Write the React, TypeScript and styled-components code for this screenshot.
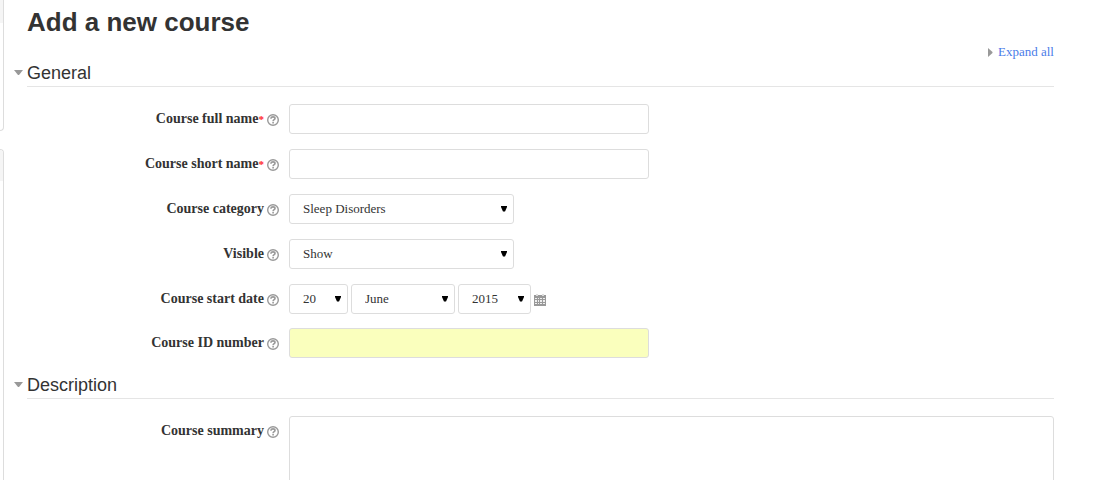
import React from "react";
import styled, { createGlobalStyle } from "styled-components";

const serif = `Georgia, "Liberation Serif", serif`;
const sans = `"Liberation Sans", Arial, sans-serif`;
const line = "#dddddd";

const GlobalStyle = createGlobalStyle`
  *, *::before, *::after { box-sizing: border-box; }
  body { margin: 0; background: #fff; color: #333; font: 13px/20px ${serif}; }
`;

const Page = styled.div`
  display: flex;
  align-items: stretch;
  min-height: 100vh;
`;

const SideRegion = styled.aside`
  display: flex;
  flex-direction: column;
  gap: 18px;
  width: 4px;
  flex: none;
`;

const Block = styled.div<{ $first?: boolean }>`
  border: 1px solid ${line};
  border-left: 0;
  border-radius: ${(p) => (p.$first ? "0 0 4px 0" : "0 4px 0 0")};
  border-top-width: ${(p) => (p.$first ? "0" : "1px")};
  border-bottom-width: ${(p) => (p.$first ? "1px" : "0")};
  height: ${(p) => (p.$first ? "131px" : "auto")};
  flex: ${(p) => (p.$first ? "none" : "1")};
  overflow: hidden;
`;

const BlockHeader = styled.div<{ $height: number }>`
  height: ${(p) => p.$height}px;
  background: #f5f5f5;
`;

const Main = styled.main`
  flex: 1;
  min-width: 0;
  padding: 0 42px 24px 10px;
`;

const Title = styled.h1`
  margin: 0;
  padding-left: 13px;
  font: bold 26px/44px ${sans};
`;

const Actions = styled.div`
  display: flex;
  justify-content: flex-end;
  line-height: 16px;
`;

const ExpandLink = styled.a`
  display: flex;
  align-items: center;
  gap: 5px;
  color: #4a7ce8;
  text-decoration: none;
`;

const SectionHeader = styled.div`
  display: flex;
  align-items: center;
`;

const Toggle = styled.button`
  flex: none;
  display: flex;
  width: 13px;
  padding: 0 0 2px;
  border: 0;
  background: none;
`;

const SectionTitle = styled.h2`
  flex: 1;
  margin: 0;
  border-bottom: 1px solid #e5e5e5;
  font: 18px/26px ${sans};
`;

const Fields = styled.div`
  display: flex;
  flex-direction: column;
  gap: 15px;
  padding: 17px 0 14px 13px;
`;

const FieldGroup = styled.div`
  display: flex;
  flex-direction: column;
  gap: 14px;
`;

const Row = styled.div`
  display: flex;
  align-items: flex-start;
  gap: 10px;
`;

const LabelCell = styled.div`
  flex: none;
  display: flex;
  justify-content: flex-end;
  align-items: center;
  gap: 3px;
  width: 252px;
  height: 30px;
`;

const Label = styled.label`
  font-size: 14px;
  font-weight: bold;
  line-height: 20px;
`;

const Required = styled.span`
  color: #f22;
  font-size: 11px;
  line-height: 1;
`;

const HelpButton = styled.button`
  display: flex;
  padding: 2px 0 0;
  border: 0;
  background: none;
`;

const Control = styled.div`
  flex: 1;
  min-width: 0;
  display: flex;
  align-items: center;
  gap: 3px;
`;

const TextInput = styled.input<{ $highlight?: boolean }>`
  width: 360px;
  max-width: 100%;
  height: 30px;
  padding: 4px 6px;
  border: 1px solid ${line};
  border-radius: 3px;
  background: ${(p) => (p.$highlight ? "#faffbd" : "#fff")};
  color: #333;
  font: 13px/20px ${serif};
`;

const TextArea = styled.textarea`
  display: block;
  width: 100%;
  height: 240px;
  padding: 4px 6px;
  border: 1px solid ${line};
  border-radius: 3px;
  background: #fff;
  color: #333;
  font: 13px/20px ${serif};
  resize: none;
`;

const SelectBox = styled.div<{ $width: number }>`
  position: relative;
  width: ${(p) => p.$width}px;
`;

const NativeSelect = styled.select`
  display: block;
  appearance: none;
  width: 100%;
  height: 30px;
  padding: 0 18px 0 13px;
  border: 1px solid ${line};
  border-radius: 3px;
  background: #fff;
  color: #333;
  font: 13px/20px ${serif};
`;

const SelectArrow = styled.svg`
  position: absolute;
  right: 7px;
  top: 11px;
  pointer-events: none;
`;

const IconButton = styled.button`
  display: flex;
  padding: 2px 0 0;
  border: 0;
  background: none;
`;

function Select({ id, width, value, label }: { id: string; width: number; value: string; label?: string }) {
  return (
    <SelectBox $width={width}>
      <NativeSelect id={id} aria-label={label} defaultValue={value}>
        <option>{value}</option>
      </NativeSelect>
      <SelectArrow width="6" height="7" viewBox="0 0 6 7" aria-hidden="true">
        <path d="M0 1h6v1L4 6.5H2L0 2z" fill="#000" />
      </SelectArrow>
    </SelectBox>
  );
}

function Field({
  id,
  label,
  required,
  children,
}: {
  id: string;
  label: string;
  required?: boolean;
  children: React.ReactNode;
}) {
  return (
    <Row>
      <LabelCell>
        <Label htmlFor={id}>
          {label}
          {required && <Required>*</Required>}
        </Label>
        <HelpButton type="button" aria-label={`Help with ${label}`}>
          <svg width="12" height="12" viewBox="0 0 12 12" fill="none" stroke="#999">
            <circle cx="6" cy="6" r="5.3" strokeWidth="1.4" />
            <path d="M4 4.8V4.2C4.1 3.3 5 2.9 6 2.9s2 .5 2 1.5c0 1.3-1.9 1.2-1.9 2.8" strokeWidth="1.6" />
            <path d="M5.3 8.8h1.6" strokeWidth="1.5" />
          </svg>
        </HelpButton>
      </LabelCell>
      <Control>{children}</Control>
    </Row>
  );
}

function Section({ title, children }: { title: string; children: React.ReactNode }) {
  return (
    <section>
      <SectionHeader>
        <Toggle type="button" aria-label={`Collapse ${title}`}>
          <svg width="9" height="5" viewBox="0 0 9 5">
            <path d="M0 0h9L5 5H4z" fill="#999" />
          </svg>
        </Toggle>
        <SectionTitle>{title}</SectionTitle>
      </SectionHeader>
      <Fields>{children}</Fields>
    </section>
  );
}

export default function App() {
  return (
    <Page>
      <GlobalStyle />
      <SideRegion>
        <Block $first>
          <BlockHeader $height={23} />
        </Block>
        <Block>
          <BlockHeader $height={31} />
        </Block>
      </SideRegion>
      <Main>
        <Title>Add a new course</Title>
        <Actions>
          <ExpandLink href="#">
            <svg width="6" height="9" viewBox="0 0 6 9" aria-hidden="true">
              <path d="M1 0l4.5 4v1L1 9z" fill="#999" />
            </svg>
            Expand all
          </ExpandLink>
        </Actions>
        <form>
          <Section title="General">
            <Field id="fullname" label="Course full name" required>
              <TextInput id="fullname" type="text" />
            </Field>
            <Field id="shortname" label="Course short name" required>
              <TextInput id="shortname" type="text" />
            </Field>
            <Field id="category" label="Course category">
              <Select id="category" width={225} value="Sleep Disorders" />
            </Field>
            <Field id="visible" label="Visible">
              <Select id="visible" width={225} value="Show" />
            </Field>
            <FieldGroup>
              <Field id="startday" label="Course start date">
                <Select id="startday" width={59} value="20" />
                <Select id="startmonth" width={104} value="June" label="Month" />
                <Select id="startyear" width={73} value="2015" label="Year" />
                <IconButton type="button" aria-label="Calendar">
                  <svg width="12" height="12" viewBox="0 0 12 12">
                    <path d="M0 1h12v11H0z" fill="#999" />
                    <path d="M2 0h2v2H2zM8 0h2v2H8z" fill="#ddd" />
                    <path
                      d="M1 4h2v1H1zM4 4h1v1H4zM6 4h2v1H6zM9 4h2v1H9zM1 6h2v2H1zM4 6h1v2H4zM6 6h2v2H6zM9 6h2v2H9zM1 9h2v1H1zM4 9h1v1H4zM6 9h2v1H6zM9 9h2v1H9z"
                      fill="#eee"
                    />
                  </svg>
                </IconButton>
              </Field>
              <Field id="idnumber" label="Course ID number">
                <TextInput id="idnumber" type="text" $highlight />
              </Field>
            </FieldGroup>
          </Section>
          <Section title="Description">
            <Field id="summary" label="Course summary">
              <TextArea id="summary" />
            </Field>
          </Section>
        </form>
      </Main>
    </Page>
  );
}
